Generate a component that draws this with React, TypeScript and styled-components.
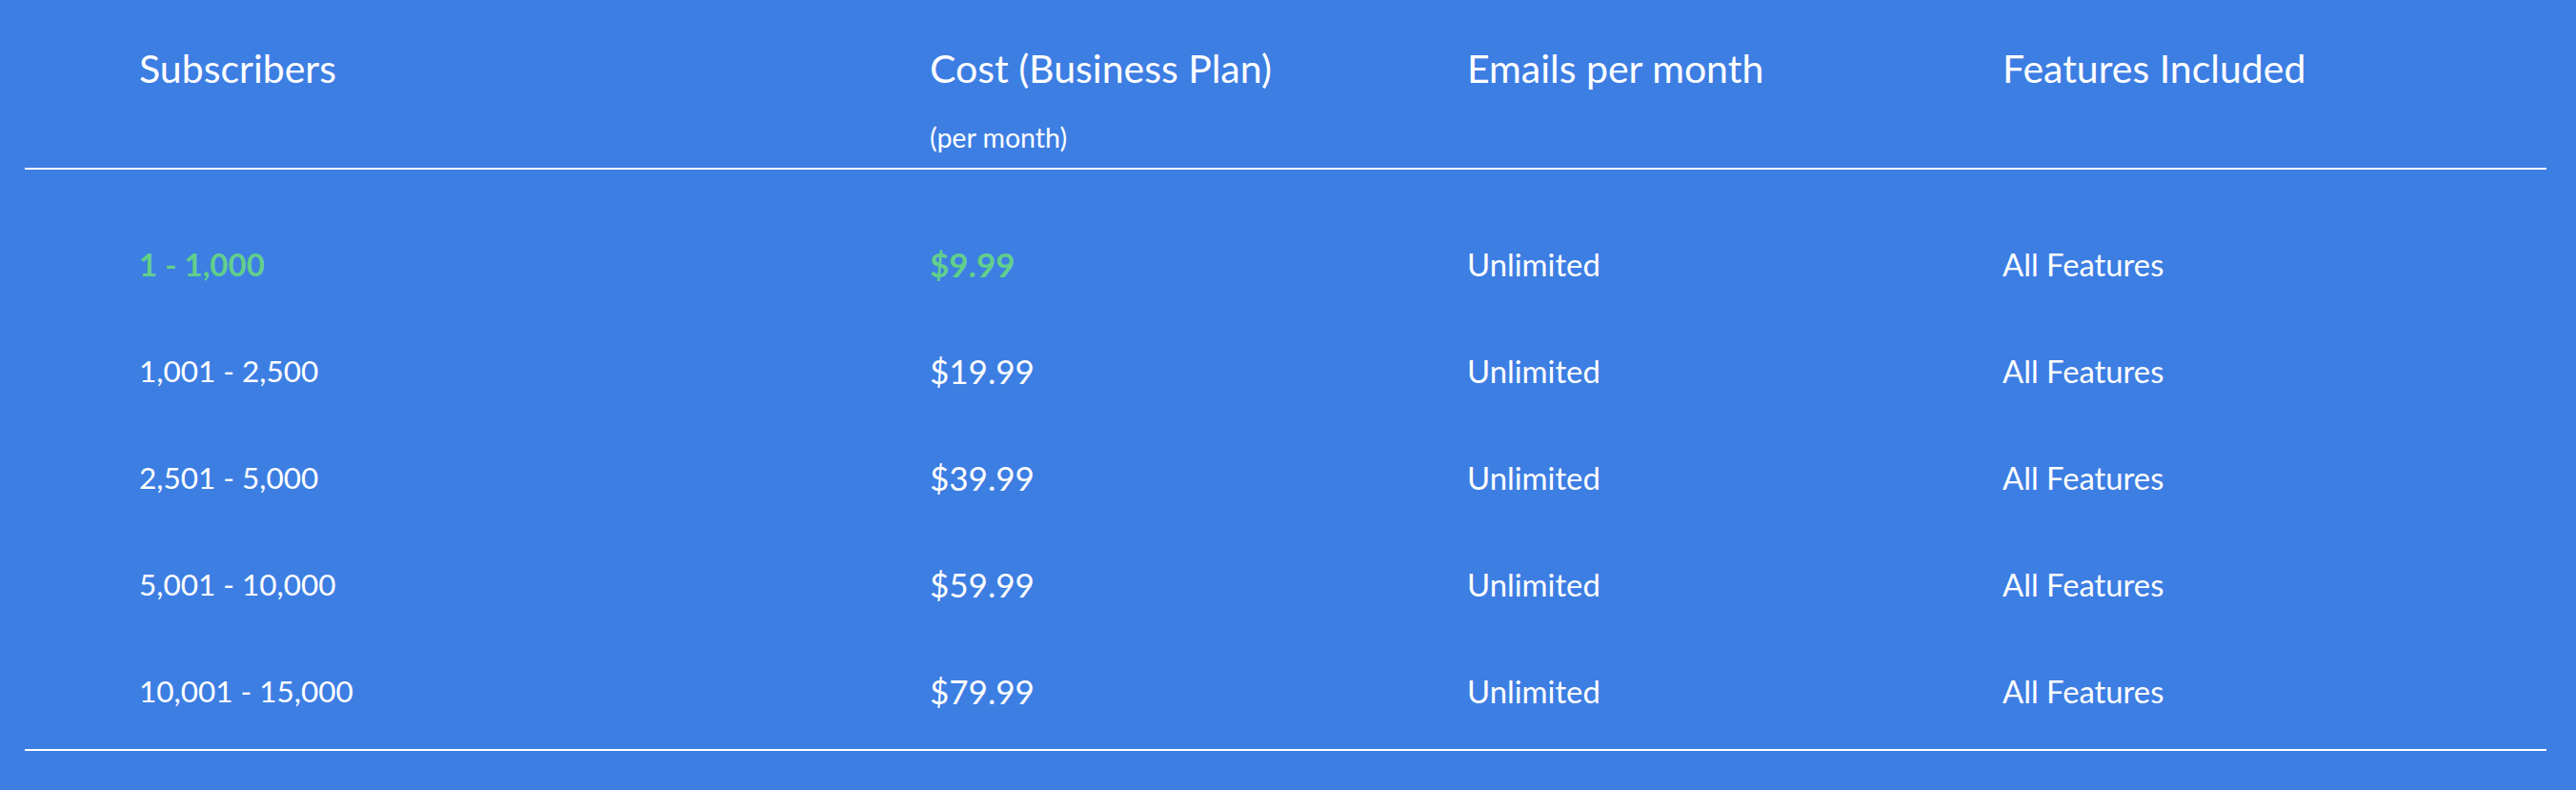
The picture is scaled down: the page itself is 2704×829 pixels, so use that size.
import React from "react";
import styled, { createGlobalStyle } from "styled-components";

const Global = createGlobalStyle`
  html, body { margin: 0; padding: 0; background: #3d7ee3; }
  body { font-family: "Lato", "Noto Sans", sans-serif; color: #ffffff; }
`;

const Page = styled.div`
  width: 2704px;
  height: 829px;
  background: #3d7ee3;
  padding: 0 31px 0 26px;
  box-sizing: border-box;
`;

const Table = styled.div`
  display: flex;
  flex-direction: column;
`;

const HeadRow = styled.div`
  display: grid;
  grid-template-columns: 830px 564px 562px 1fr;
  padding: 48px 0 0 120px;
  height: 178px;
  box-sizing: border-box;
  border-bottom: 2px solid #ffffff;
`;

const HeadCell = styled.div`
  display: flex;
  flex-direction: column;
`;

const HeadTitle = styled.div`
  font-size: 41px;
  line-height: 48px;
  font-weight: 400;
  white-space: nowrap;
`;

const HeadSub = styled.div`
  font-size: 28.5px;
  line-height: 32px;
  margin-top: 32px;
  white-space: nowrap;
`;

const Body = styled.div`
  display: flex;
  flex-direction: column;
  padding: 43px 0 5px;
  border-bottom: 2px solid #ffffff;
`;

const Row = styled.div`
  display: grid;
  grid-template-columns: 830px 564px 562px 1fr;
  align-items: center;
  height: 112px;
  padding-left: 120px;
`;

type Kind = "range" | "price" | "text";

const sizes: Record<Kind, string> = {
  range: "31.5px",
  price: "35px",
  text: "32.8px",
};

const Cell = styled.div<{ $highlight?: boolean; $kind: Kind }>`
  font-size: ${(p) => (p.$highlight && p.$kind === "range" ? "33px" : sizes[p.$kind])};
  font-weight: ${(p) => (p.$highlight ? 700 : 400)};
  color: ${(p) => (p.$highlight ? "#62cf8b" : "#ffffff")};
  white-space: nowrap;
`;

const rows = [
  { subs: "1 - 1,000", cost: "$9.99" },
  { subs: "1,001 - 2,500", cost: "$19.99" },
  { subs: "2,501 - 5,000", cost: "$39.99" },
  { subs: "5,001 - 10,000", cost: "$59.99" },
  { subs: "10,001 - 15,000", cost: "$79.99" },
];

export default function App() {
  return (
    <>
      <Global />
      <Page>
        <Table>
          <HeadRow>
            <HeadCell>
              <HeadTitle>Subscribers</HeadTitle>
            </HeadCell>
            <HeadCell>
              <HeadTitle>Cost (Business Plan)</HeadTitle>
              <HeadSub>(per month)</HeadSub>
            </HeadCell>
            <HeadCell>
              <HeadTitle>Emails per month</HeadTitle>
            </HeadCell>
            <HeadCell>
              <HeadTitle>Features Included</HeadTitle>
            </HeadCell>
          </HeadRow>
          <Body>
            {rows.map((r, i) => (
              <Row key={r.subs}>
                <Cell $kind="range" $highlight={i === 0}>{r.subs}</Cell>
                <Cell $kind="price" $highlight={i === 0}>{r.cost}</Cell>
                <Cell $kind="text">Unlimited</Cell>
                <Cell $kind="text">All Features</Cell>
              </Row>
            ))}
          </Body>
        </Table>
      </Page>
    </>
  );
}
